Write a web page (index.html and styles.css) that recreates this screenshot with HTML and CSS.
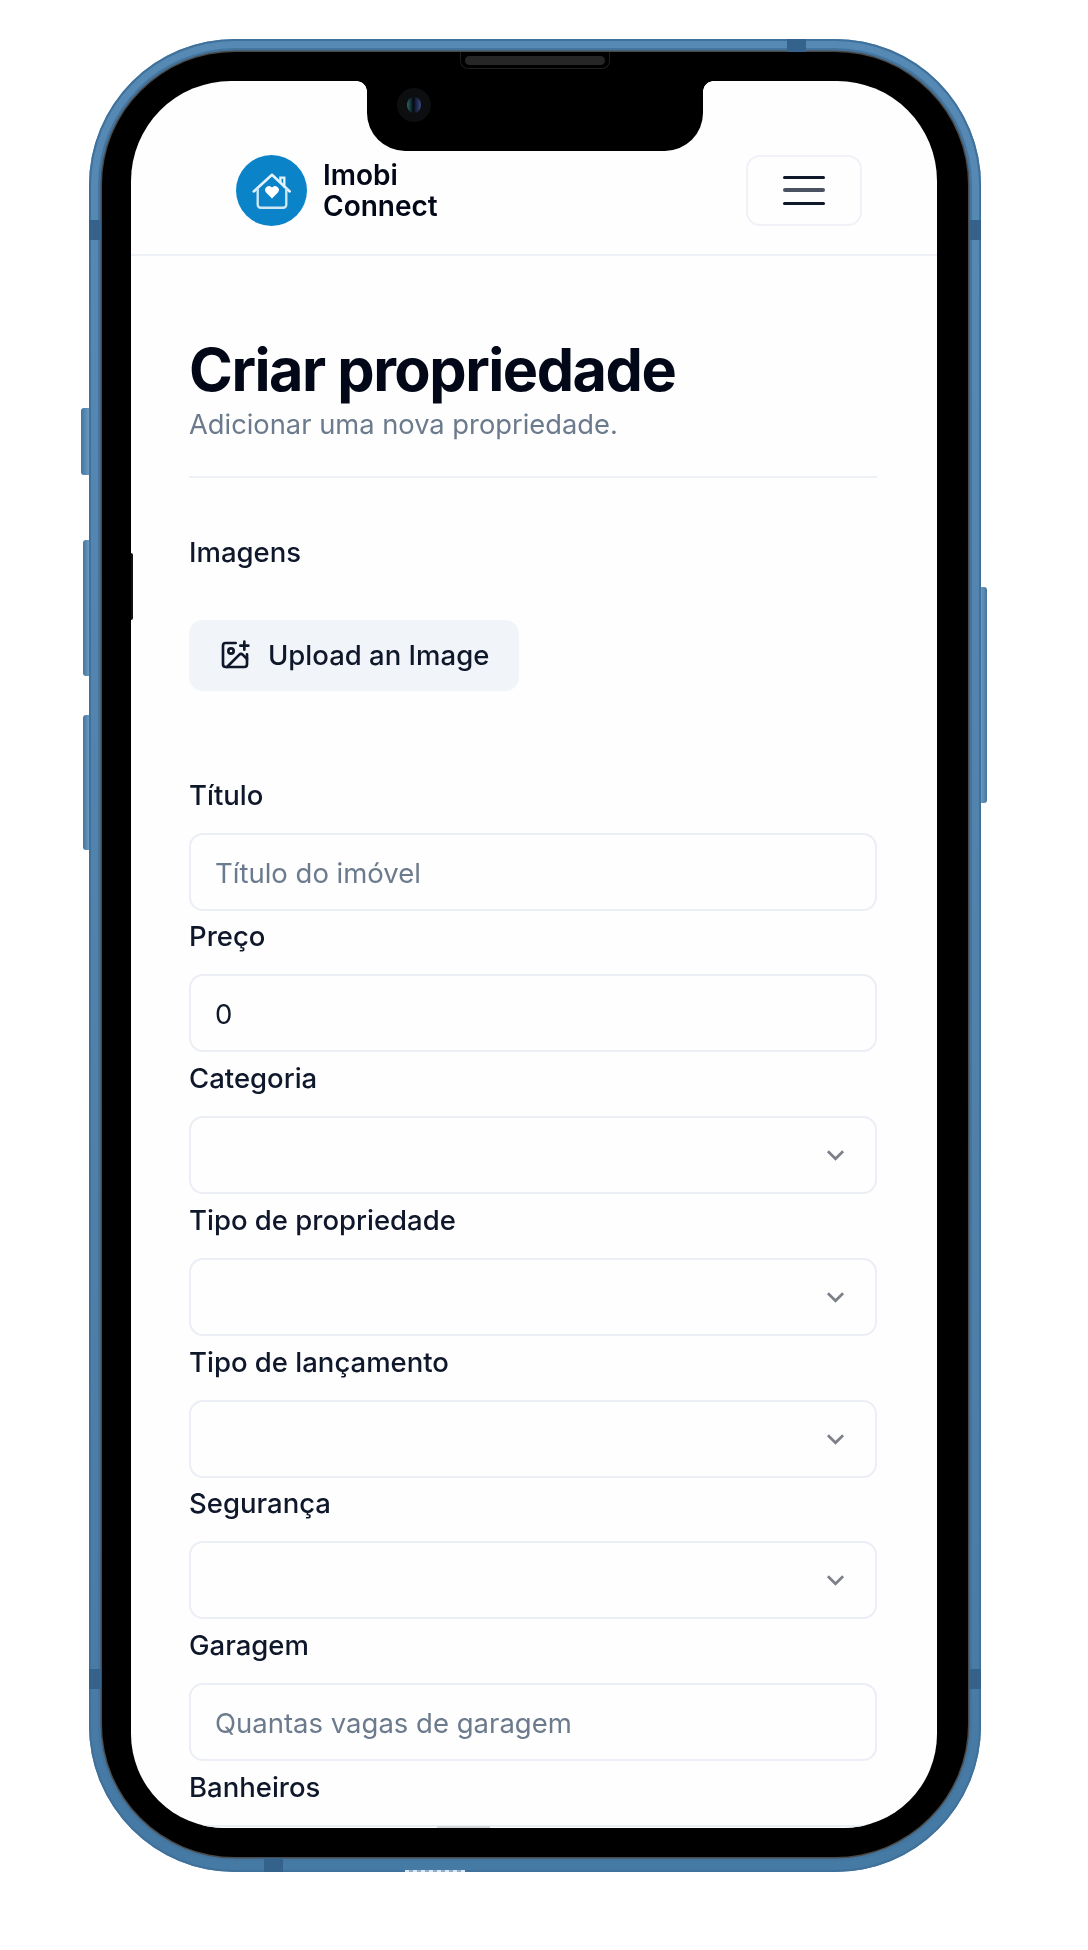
FILE: index.html
```html
<!DOCTYPE html>
<html lang="en">
<head>
  <meta charset="UTF-8">
  <meta name="viewport" content="width=device-width, initial-scale=1.0">
  <title>Criar propriedade</title>
  <link rel="stylesheet" href="styles.css">
</head>
<body>
  <div class="phone">
    <span class="side-btn mute"></span>
    <span class="side-btn vol-up"></span>
    <span class="side-btn vol-down"></span>
    <span class="side-btn power"></span>
    <span class="band band-top"></span>
    <span class="band band-bottom"></span>
    <span class="band band-left"></span>
    <span class="band band-right"></span>
    <span class="band band-left low"></span>
    <span class="band band-right low"></span>
    <span class="bottom-mark"></span>

    <div class="bezel">
      <div class="speaker"><span></span></div>
      <span class="bezel-bump"></span>
      <div class="screen">
        <div class="notch">
          <div class="camera"><span></span></div>
        </div>

        <header class="topbar">
          <div class="brand">
            <svg class="brand-icon" viewBox="0 0 72 72">
              <circle cx="36" cy="36" r="36" fill="#0a83c8"/>
              <path d="M18 37 L36.500 20 L54.500 37" fill="none" stroke="#e4f2fa" stroke-width="2.600" stroke-linecap="round" stroke-linejoin="round"/>
              <path d="M22 33 V50.500 a3 3 0 0 0 3 3 H48 a3 3 0 0 0 3 -3 V33" fill="none" stroke="#cfe6f4" stroke-width="2.400"/>
              <path d="M45 28 V23 H49 V33" fill="none" stroke="#e4f2fa" stroke-width="2.400"/>
              <path d="M36.500 44 L30.500 38 a3.800 3.800 0 0 1 6 -5 a3.800 3.800 0 0 1 6 5 Z" fill="#fff"/>
            </svg>
            <div class="brand-name">Imobi<br>Connect</div>
          </div>
          <button class="menu-btn" type="button">
            <span class="bar"></span>
            <span class="bar mid"></span>
            <span class="bar"></span>
          </button>
        </header>

        <main class="content">
          <h1>Criar propriedade</h1>
          <p class="subtitle">Adicionar uma nova propriedade.</p>
          <hr class="divider">

          <label class="label images-label">Imagens</label>
          <button class="upload-btn" type="button">
            <svg class="upload-icon" viewBox="0 0 24 24" fill="none" stroke="#0f172a" stroke-width="2" stroke-linecap="round" stroke-linejoin="round">
              <path d="M16 5h6"/>
              <path d="M19 2v6"/>
              <path d="M21 11.500V19a2 2 0 0 1-2 2H5a2 2 0 0 1-2-2V5a2 2 0 0 1 2-2h7.500"/>
              <path d="m21 15-3.086-3.086a2 2 0 0 0-2.828 0L6 21"/>
              <circle cx="9" cy="9" r="2"/>
            </svg>
            Upload an Image
          </button>

          <form class="fields">
            <div class="field">
              <label class="label">Título</label>
              <input class="input" type="text" placeholder="Título do imóvel">
            </div>
            <div class="field">
              <label class="label">Preço</label>
              <input class="input" type="text" value="0">
            </div>
            <div class="field">
              <label class="label">Categoria</label>
              <div class="select"><svg class="chevron" viewBox="0 0 20 12"><path d="M2 2 L10 10 L18 2"/></svg></div>
            </div>
            <div class="field">
              <label class="label">Tipo de propriedade</label>
              <div class="select"><svg class="chevron" viewBox="0 0 20 12"><path d="M2 2 L10 10 L18 2"/></svg></div>
            </div>
            <div class="field">
              <label class="label">Tipo de lançamento</label>
              <div class="select"><svg class="chevron" viewBox="0 0 20 12"><path d="M2 2 L10 10 L18 2"/></svg></div>
            </div>
            <div class="field">
              <label class="label">Segurança</label>
              <div class="select"><svg class="chevron" viewBox="0 0 20 12"><path d="M2 2 L10 10 L18 2"/></svg></div>
            </div>
            <div class="field">
              <label class="label">Garagem</label>
              <input class="input" type="text" placeholder="Quantas vagas de garagem">
            </div>
            <div class="field">
              <label class="label">Banheiros</label>
              <input class="input" type="text">
            </div>
          </form>
        </main>
        <span class="home-bar"></span>
      </div>
    </div>
  </div>
</body>
</html>
```

FILE: styles.css
```css
body {
  margin: 0;
  background: #fff;
  font-family: 'Inter', sans-serif;
  color: #0f172a;
}

/* device frame */
.phone {
  position: relative;
  box-sizing: border-box;
  width: 892px;
  height: 1833px;
  margin: 39px 0 0 89px;
  padding: 13px 13px 15px 13px;
  border-radius: 146px;
  background: linear-gradient(180deg, #568ab5, #5080aa 60%, #457aa5);
  box-shadow: inset 0 0 0 2px #3f719b;
}
.side-btn {
  position: absolute;
  background: linear-gradient(90deg, #44759f, #6b9ac0);
}
.mute {
  left: -8px;
  top: 369px;
  width: 8px;
  height: 67px;
  border-radius: 3px 0 0 3px;
}
.vol-up {
  left: -6px;
  top: 501px;
  width: 6px;
  height: 136px;
  border-radius: 3px 0 0 3px;
}
.vol-down {
  left: -6px;
  top: 676px;
  width: 6px;
  height: 135px;
  border-radius: 3px 0 0 3px;
}
.power {
  right: -6px;
  top: 548px;
  width: 6px;
  height: 216px;
  border-radius: 0 3px 3px 0;
  background: linear-gradient(90deg, #6b9ac0, #44759f);
}
.band {
  position: absolute;
  z-index: 2;
  background: #34628a;
}
.band-top {
  top: 0;
  left: 698px;
  width: 19px;
  height: 13px;
}
.band-bottom {
  bottom: 0;
  left: 175px;
  width: 19px;
  height: 14px;
}
.band-left {
  left: 0;
  top: 181px;
  width: 12px;
  height: 20px;
}
.band-right {
  right: 0;
  top: 181px;
  width: 12px;
  height: 20px;
}
.band-left.low,
.band-right.low {
  top: 1630px;
}
.bottom-mark {
  position: absolute;
  z-index: 2;
  left: 316px;
  bottom: 0;
  width: 60px;
  height: 2px;
  background: repeating-linear-gradient(90deg, #dfe8f0 0 4px, #8fb0cc 4px 8px);
}
.bezel {
  position: relative;
  z-index: 1;
  box-sizing: border-box;
  height: 100%;
  padding: 29px 31px 29px 29px;
  border-radius: 133px;
  background: #000;
  box-shadow: 0 0 0 1.500px #4a4a4a, 0 0 0 4px #44759f;
}
.bezel-bump {
  position: absolute;
  z-index: 3;
  left: 29px;
  top: 501px;
  width: 1.500px;
  height: 67px;
  border-radius: 0 2px 2px 0;
  background: #111;
}
.speaker {
  position: absolute;
  z-index: 3;
  top: 0;
  left: 358px;
  box-sizing: border-box;
  width: 150px;
  height: 17px;
  padding: 4px;
  border: 1px solid #1e1e1e;
  border-top: none;
  border-radius: 0 0 8px 8px;
}
.speaker span {
  display: block;
  height: 9px;
  border-radius: 5px;
  background: #262626;
}
.screen {
  position: relative;
  height: 100%;
  overflow: hidden;
  border-radius: 100px 100px 94px 94px;
  background: #fefefe;
}
.notch {
  position: absolute;
  z-index: 2;
  top: 0;
  left: 236px;
  width: 336px;
  height: 70px;
  border-radius: 0 0 38px 38px;
  background: #000;
}
.notch::before,
.notch::after {
  content: "";
  position: absolute;
  top: 0;
  width: 10px;
  height: 10px;
}
.notch::before {
  left: -10px;
  background: radial-gradient(circle at 0 100%, transparent 9.500px, #000 10px);
}
.notch::after {
  right: -10px;
  background: radial-gradient(circle at 100% 100%, transparent 9.500px, #000 10px);
}
.camera {
  position: absolute;
  top: 7px;
  left: 30px;
  display: flex;
  align-items: center;
  justify-content: center;
  width: 34px;
  height: 34px;
  border-radius: 50%;
  background: #0c0e10;
}
.camera span {
  width: 14px;
  height: 16px;
  border-radius: 50%;
  background: linear-gradient(90deg, #2a6a68, #05090f 45%, #3d4a8c);
}
.home-bar {
  position: absolute;
  left: 306px;
  bottom: 0;
  width: 53px;
  height: 2px;
  background: #d5d8dd;
}

/* top bar */
.topbar {
  display: flex;
  align-items: center;
  justify-content: space-between;
  box-sizing: border-box;
  height: 175px;
  padding: 45px 75px 0 105px;
  border-bottom: 2px solid #eef1f6;
}
.brand {
  display: flex;
  align-items: center;
  gap: 16px;
  filter: blur(0.4px);
}
.brand-icon {
  display: block;
  width: 71px;
  height: 71px;
}
.brand-name {
  padding-top: 1px;
  font-size: 28px;
  font-weight: 600;
  line-height: 31px;
  color: #020817;
}
.menu-btn {
  display: flex;
  flex-direction: column;
  align-items: center;
  justify-content: center;
  gap: 9.500px;
  width: 116px;
  height: 71px;
  padding: 0;
  border: 2px solid #f0f2f8;
  border-radius: 14px;
  background: #fefefe;
}
.bar {
  width: 42px;
  height: 3px;
  border-radius: 2px;
  background: #0f172a;
}
.bar.mid {
  height: 4px;
  background: #4a5160;
}

/* page content */
.content {
  padding: 82px 60px 0 58px;
  filter: blur(0.4px);
}
h1 {
  margin: 0;
  font-size: 59.300px;
  font-weight: 700;
  line-height: 64px;
  letter-spacing: -0.025em;
  color: #020817;
}
.subtitle {
  margin: 5px 0 0;
  font-size: 27.300px;
  line-height: 36px;
  color: #6b7a8c;
}
.divider {
  height: 2px;
  margin: 32.500px 0 0;
  border: none;
  background: #eef1f6;
}
.label {
  display: block;
  font-size: 27.500px;
  font-weight: 500;
  line-height: 36px;
  color: #0f172a;
}
.images-label {
  margin-top: 56px;
}
.upload-btn {
  display: flex;
  align-items: center;
  gap: 17px;
  box-sizing: border-box;
  width: 330px;
  height: 71px;
  margin-top: 50px;
  padding: 0 0 0 30px;
  border: none;
  border-radius: 14px;
  background: #f1f5f9;
  font-family: inherit;
  font-size: 27.500px;
  font-weight: 500;
  color: #0f172a;
}
.upload-icon {
  width: 32px;
  height: 32px;
  flex: none;
}
.fields {
  margin-top: 86px;
}
.field {
  margin-bottom: 7.800px;
}
.field .label {
  margin-bottom: 20px;
}
.input,
.select {
  display: block;
  box-sizing: border-box;
  width: 100%;
  height: 78px;
  padding: 2px 24px 0;
  border: 2px solid #ebeef5;
  border-radius: 14px;
  background: #fefefe;
  font-family: inherit;
  font-size: 27.500px;
  color: #0f172a;
}
.input::placeholder {
  color: #6b7a8c;
}
.select {
  display: flex;
  align-items: center;
  justify-content: flex-end;
  padding: 0 30px 0 0;
}
.chevron {
  width: 19px;
  height: 12px;
  fill: none;
  stroke: #7d8088;
  stroke-width: 2.800;
}
```
